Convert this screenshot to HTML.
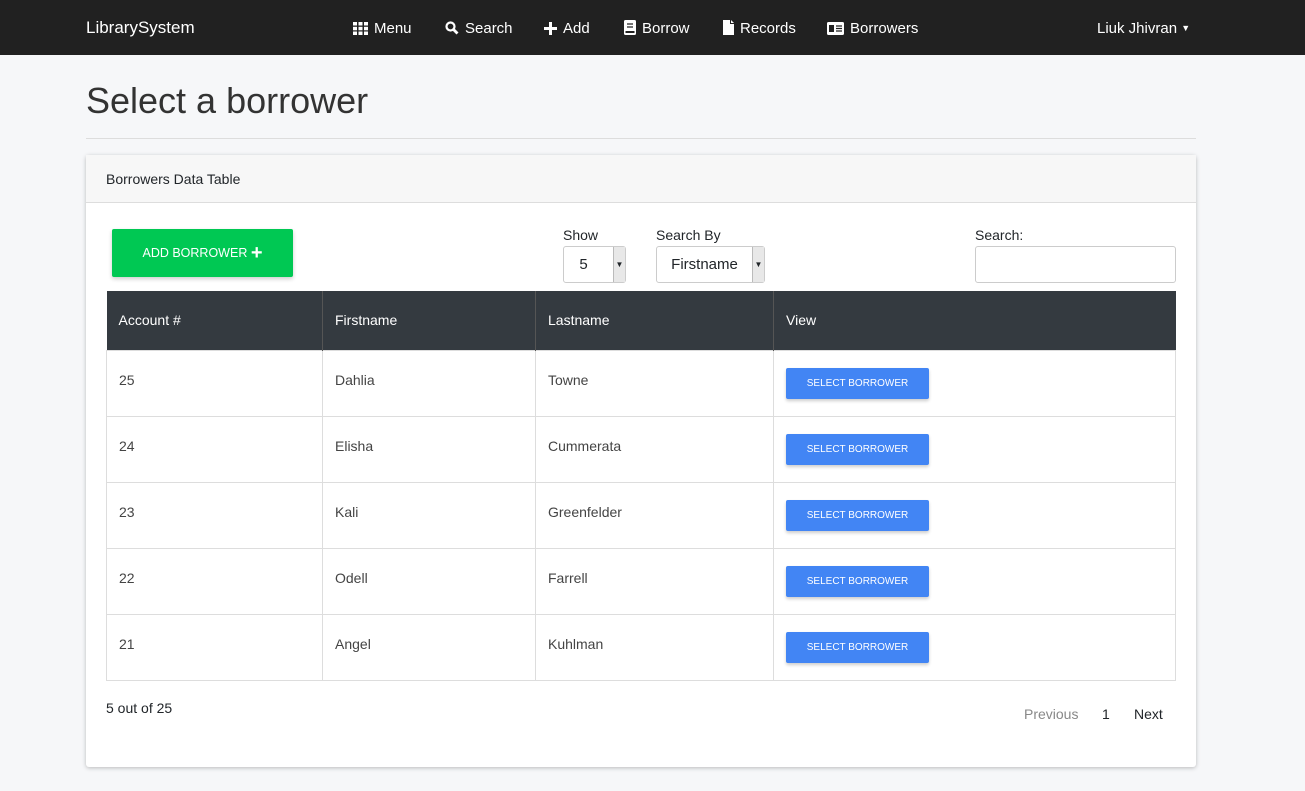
<!DOCTYPE html>
<html><head><meta charset="utf-8"><style>
*{box-sizing:border-box}
body{margin:0;width:1305px;height:791px;background:#f6f7f9;font-family:"Liberation Sans",sans-serif;color:#212529;overflow:hidden;position:relative}
.nav{position:absolute;left:0;top:0;width:1305px;height:55px;background:#212121;color:#fff;font-size:15px}
.nav span{position:absolute;top:20px;white-space:nowrap}
.nav svg{vertical-align:-2px;margin-right:6px}
h1{position:absolute;left:86px;top:80px;margin:0;font-size:36px;font-weight:normal;color:#333}
.hr{position:absolute;left:86px;top:138px;width:1110px;height:1px;background:#ddd}
.card{position:absolute;left:86px;top:155px;width:1110px;height:612px;background:#fff;border-radius:3px;box-shadow:0 1px 4px rgba(0,0,0,.25)}
.ch{height:48px;background:#f7f7f7;border-bottom:1px solid #ddd;padding:16px 20px;font-size:14px}
.btn{position:absolute;left:26px;top:74px;width:181px;height:48px;background:#00c853;color:#fff;font-size:12.5px;text-align:center;line-height:48px;border-radius:2px;box-shadow:0 2px 4px rgba(0,0,0,.2)}
.lbl{position:absolute;font-size:14px}
.sel{position:absolute;height:37px;border:1px solid #ccc;border-radius:3px;font-size:15px;line-height:35px;text-align:center;background:#fff}
.sel i{position:absolute;right:0;top:0;width:12px;height:35px;background:#e8e8e8;border-left:1px solid #bbb;font-style:normal;font-size:8px;line-height:35px}
table{position:absolute;left:20px;top:136px;width:1070px;border-collapse:collapse;font-size:14px}
th{background:#343a40;color:#fff;font-weight:normal;text-align:left;height:59px;padding:0 12px;border-left:1px solid #555}
td{height:66px;padding:0 12px 6px;border:1px solid #ddd;color:#444;vertical-align:middle}
td .sb{margin-top:6px}
.sb{display:inline-block;width:143px;height:31px;background:#4285f4;color:#fff;font-size:10px;text-align:center;line-height:31px;border-radius:2px;box-shadow:0 2px 3px rgba(0,0,0,.2)}
</style></head><body>
<div class="nav">
<span style="left:86px;font-size:17px;top:18px">LibrarySystem</span>
<span style="left:353px"><svg width="15" height="13" viewBox="0 0 15 13" fill="#fff"><rect x="0" y="0" width="4" height="3.5"/><rect x="5.5" y="0" width="4" height="3.5"/><rect x="11" y="0" width="4" height="3.5"/><rect x="0" y="4.8" width="4" height="3.5"/><rect x="5.5" y="4.8" width="4" height="3.5"/><rect x="11" y="4.8" width="4" height="3.5"/><rect x="0" y="9.5" width="4" height="3.5"/><rect x="5.5" y="9.5" width="4" height="3.5"/><rect x="11" y="9.5" width="4" height="3.5"/></svg>Menu</span>
<span style="left:445px"><svg width="14" height="14" viewBox="0 0 14 14"><circle cx="5.5" cy="5.5" r="4" stroke="#fff" stroke-width="2.2" fill="none"/><path d="M8.5 8.5L12.5 12.5" stroke="#fff" stroke-width="2.8"/></svg>Search</span>
<span style="left:544px"><svg width="13" height="13" viewBox="0 0 13 13"><path d="M6.5 0V13M0 6.5H13" stroke="#fff" stroke-width="3"/></svg>Add</span>
<span style="left:624px"><svg width="12" height="15" viewBox="0 0 12 15"><rect x="0" y="0" width="12" height="15" rx="1.5" fill="#fff"/><path d="M3 4H9M3 7H9" stroke="#212121" stroke-width="1.3"/><rect x="1.5" y="11" width="9" height="2" fill="#212121"/></svg>Borrow</span>
<span style="left:723px"><svg width="11" height="15" viewBox="0 0 11 15" fill="#fff"><path d="M0 0H7V4H11V15H0Z"/><path d="M8 0L11 3H8Z"/></svg>Records</span>
<span style="left:827px"><svg width="17" height="13" viewBox="0 0 17 13"><rect x="0" y="0" width="17" height="13" rx="1.5" fill="#fff"/><rect x="2" y="3" width="5" height="7" fill="#212121"/><path d="M9 4H15M9 6.5H15M9 9H15" stroke="#212121" stroke-width="1.3"/></svg>Borrowers</span>
<span style="left:1097px">Liuk Jhivran <span style="position:static;font-size:9px;vertical-align:2px">&#9660;</span></span>
</div>
<h1>Select a borrower</h1>
<div class="hr"></div>
<div class="card">
<div class="ch">Borrowers Data Table</div>
<div class="btn">ADD BORROWER <b style="font-size:20px;vertical-align:-2px">+</b></div>
<div class="lbl" style="left:477px;top:72px">Show</div>
<div class="sel" style="left:477px;top:91px;width:63px;padding-right:22px">5<i>▼</i></div>
<div class="lbl" style="left:570px;top:72px">Search By</div>
<div class="sel" style="left:570px;top:91px;width:109px;padding-right:12px">Firstname<i>▼</i></div>
<div class="lbl" style="left:889px;top:72px">Search:</div>
<div class="sel" style="left:889px;top:91px;width:201px"></div>
<table>
<tr><th style="width:216px;border-left:none">Account #</th><th style="width:213px">Firstname</th><th style="width:238px">Lastname</th><th>View</th></tr>
<tr><td>25</td><td>Dahlia</td><td>Towne</td><td><span class="sb">SELECT BORROWER</span></td></tr>
<tr><td>24</td><td>Elisha</td><td>Cummerata</td><td><span class="sb">SELECT BORROWER</span></td></tr>
<tr><td>23</td><td>Kali</td><td>Greenfelder</td><td><span class="sb">SELECT BORROWER</span></td></tr>
<tr><td>22</td><td>Odell</td><td>Farrell</td><td><span class="sb">SELECT BORROWER</span></td></tr>
<tr><td>21</td><td>Angel</td><td>Kuhlman</td><td><span class="sb">SELECT BORROWER</span></td></tr>
</table>
<div class="lbl" style="left:20px;top:545px">5 out of 25</div>
<div class="lbl" style="left:938px;top:551px;color:#888">Previous</div>
<div class="lbl" style="left:1016px;top:551px">1</div>
<div class="lbl" style="left:1048px;top:551px">Next</div>
</div>
</body></html>
